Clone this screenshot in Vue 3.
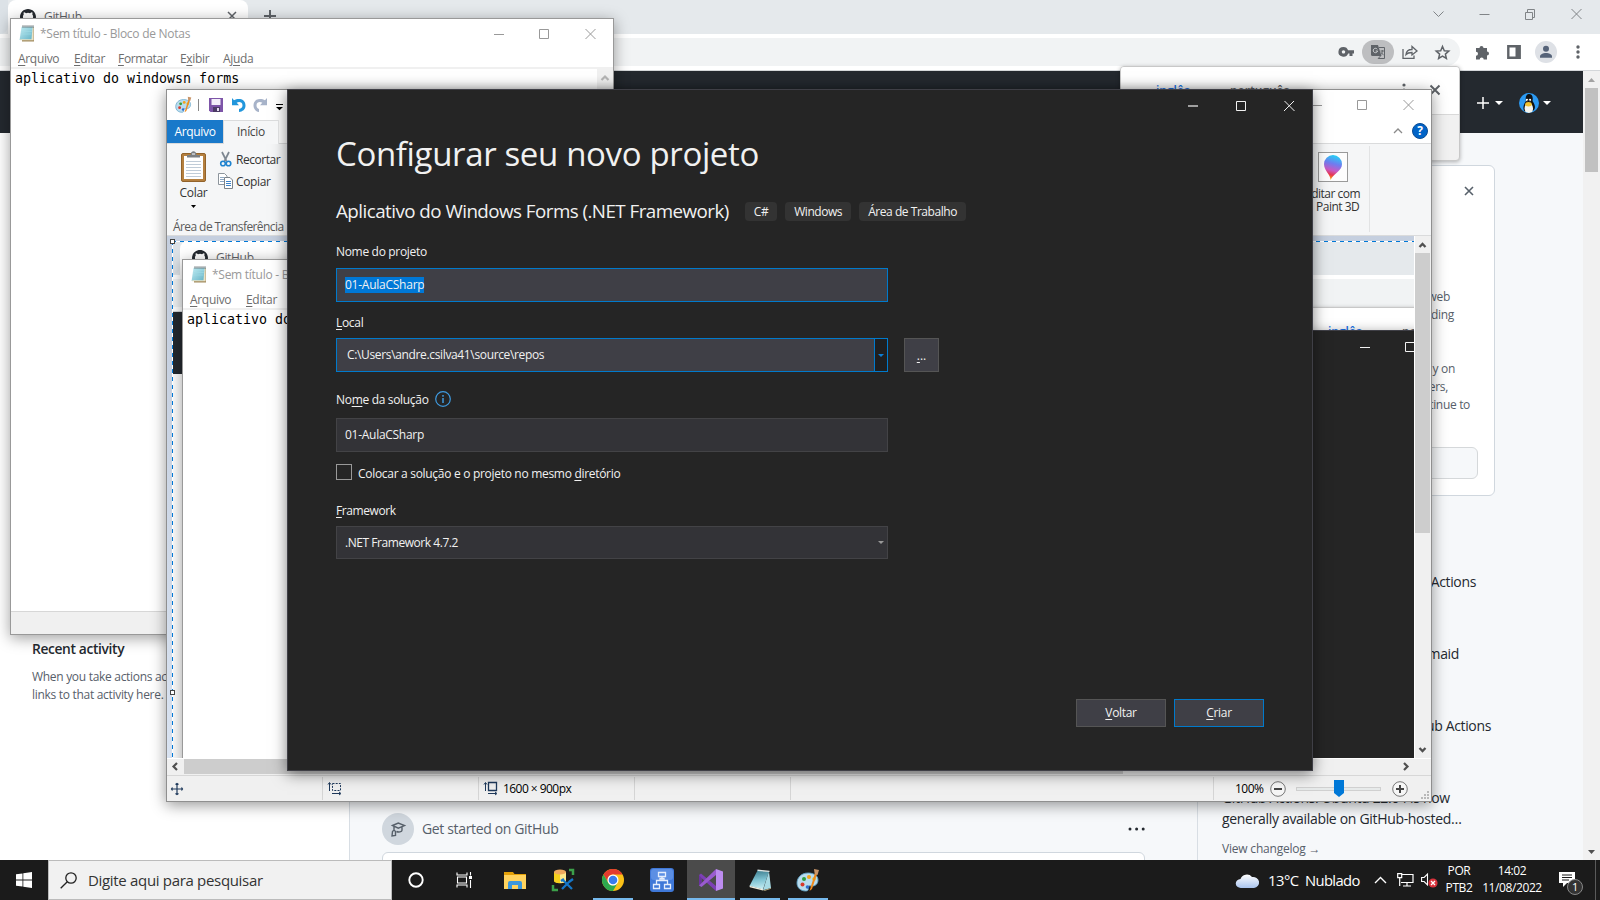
<script setup>
const menus = [
  ['A', 'rquivo', ''],
  ['E', 'ditar', ''],
  ['F', 'ormatar', ''],
  ['x', 'ibir', 'E'],
  ['u', 'da', 'Aj'],
]
const menuClass = ['m0', 'm1', 'm2', 'm3', 'm4']
const note = 'aplicativo do windowsn forms'
const tags = ['C#', 'Windows', 'Área de Trabalho']
</script>

<template>
  <div class="desktop">
    <svg class="defs" width="0" height="0">
      <defs>
        <linearGradient id="padG" x1="0" y1="0" x2="1" y2="1">
          <stop offset="0" stop-color="#c4edf3" /><stop offset="1" stop-color="#5fb0c4" />
        </linearGradient>
        <linearGradient id="padDark" x1=".4" y1="0" x2=".5" y2="1">
          <stop offset="0" stop-color="#3f7f90" /><stop offset=".5" stop-color="#7fc3d2" /><stop offset="1" stop-color="#c9eff5" />
        </linearGradient>
        <linearGradient id="dropG" x1=".6" y1="0" x2=".4" y2="1">
          <stop offset="0" stop-color="#22d3f5" /><stop offset=".35" stop-color="#6f7df0" />
          <stop offset=".62" stop-color="#c95ac4" /><stop offset=".8" stop-color="#e8384f" /><stop offset="1" stop-color="#ffb400" />
        </linearGradient>
        <linearGradient id="cloudG" x1="0" y1="0" x2="0" y2="1">
          <stop offset="0" stop-color="#ffffff" /><stop offset="1" stop-color="#a9c4ee" />
        </linearGradient>
        <symbol id="notepad" viewBox="0 0 16 17">
          <path d="M3 2h12v14.5H3z" fill="#a08a5c" /><path d="M2.5 1.8h12L12.8 15H.6z" fill="url(#padG)" />
          <path d="M13.6 2l1 .2v13H1l.3-1h11.2z" fill="#e9e2c6" />
          <path d="M3 4h10M2.8 6.500h10M2.500 9h10" stroke="#9fdbe5" stroke-width=".6" />
          <path d="M4 .3v2.500M6 .3v2.500M8 .3v2.500M10 .3v2.500M12 .3v2.500M14 .3v2.500" stroke="#4f5a5e" stroke-width=".9" />
        </symbol>
        <symbol id="palette" viewBox="0 0 24 24">
          <path d="M12 5C5 5 1 10 1 15s4 8 8.500 8c3 0 3-1.500 2.500-3s.5-2.500 3-2c4 .6 7-2 7-6 0-4.500-4.500-7-10-7z" fill="#b9dcee" stroke="#5b9fc4" stroke-width=".9" />
          <circle cx="6.500" cy="16.500" r="2" fill="#d8392b" /><circle cx="8" cy="11" r="2" fill="#2f9e3f" />
          <circle cx="13" cy="9" r="2" fill="#f2a41c" /><circle cx="18" cy="11" r="1.800" fill="#e8c21c" />
          <circle cx="11.500" cy="19" r="1.800" fill="#2f6fd0" />
          <path d="M19 5l2 1-5 15-2.500 2z" fill="#f08a1d" /><path d="M18 1l5 1-1.500 5-2.800-1z" fill="#c79468" />
        </symbol>
        <symbol id="octocat" viewBox="0 0 16 16">
          <path fill="#24292f" d="M8 0C3.580 0 0 3.580 0 8c0 3.540 2.290 6.530 5.470 7.590.4.070.55-.17.55-.38v-1.490c-2.010.37-2.530-.49-2.690-.94-.09-.23-.48-.94-.82-1.130-.28-.15-.68-.52-.01-.53.63-.01 1.080.58 1.230.82.72 1.210 1.870.87 2.330.66.07-.52.28-.87.51-1.070-1.780-.2-3.640-.89-3.640-3.950 0-.87.31-1.590.82-2.150-.08-.2-.36-1.020.08-2.120 0 0 .67-.21 2.200.82a7.600 7.600 0 0 1 4 0c1.530-1.040 2.200-.82 2.200-.82.44 1.100.16 1.920.08 2.120.51.56.82 1.270.82 2.150 0 3.070-1.870 3.750-3.650 3.950.29.25.54.73.54 1.480v2.200c0 .21.15.46.55.38A8.010 8.010 0 0 0 16 8c0-4.420-3.580-8-8-8z" />
        </symbol>
        <symbol id="winbtns" viewBox="0 0 102 12">
          <path d="M0 6.500h10M45.500 1.500h9v9h-9zM91.500 1l10 10M101.500 1l-10 10" fill="none" stroke="currentColor" />
        </symbol>
      </defs>
    </svg>

    <!-- browser -->
    <div class="chrome">
      <div class="strip">
        <div class="edge"></div>
        <div class="tab">
          <svg width="16" height="16"><use href="#octocat" /></svg>
          <span class="tabname">GitHub</span>
          <svg class="tabx" width="8" height="8"><path d="M0 0l8 8M8 0L0 8" stroke="#5f6368" stroke-width="1.500" /></svg>
        </div>
        <svg class="plus" width="12" height="12"><path d="M6 0v12M0 6h12" stroke="#5f6368" stroke-width="2" /></svg>
        <svg class="sysbtns" width="150" height="12" viewBox="0 0 150 12" fill="none" stroke="#808487">
          <path d="M.5 3.500l5 5 5-5M46.500 6.500h10M92.500 4.500h7v7h-7zM94.500 4V1.500h7v8H99M138.500 1l10 10M148.500 1l-10 10" />
        </svg>
      </div>
      <div class="toolbar">
        <div class="omni">
          <svg width="15" height="10" viewBox="0 0 15 10"><path fill="#5f6368" fill-rule="evenodd" d="M4.500 0a5 4.800 0 0 1 4.600 3.300H15v3.200h-1.500V9h-3V6.500H9.100A5 4.800 0 1 1 4.500 0zm0 3.200a1.700 1.700 0 1 0 .01 0z" /></svg>
          <span class="trans">
            <svg width="14" height="14" viewBox="0 0 14 14"><path d="M0 0h7l3.500 11H1.500A1.500 1.500 0 0 1 0 9.500z" fill="#5f6368" /><path d="M8 2.500h5.500v11H7.200L9.500 11" fill="none" stroke="#5f6368" /><path d="M6.300 4.300A2.200 2.200 0 1 0 6.600 6H4.700" fill="none" stroke="#d8dadd" stroke-width=".9" /><path d="M9.500 6H13M11.300 5v1c0 2-.6 3-1.400 3.600M10.300 7.500l2.200 2.700" fill="none" stroke="#5f6368" stroke-width=".9" /></svg>
          </span>
          <svg width="16" height="14" viewBox="0 0 16 14" fill="none" stroke="#5f6368" stroke-width="1.300"><path d="M1 4v9.300h11V10.500M4 9.500c.3-3.500 3-5 6-5V1.500L15 6l-5 4V7.500c-2.500 0-4.500.3-6 2z" /></svg>
          <svg class="star" width="15" height="15" viewBox="0 0 15 15"><path d="M7.500 1.500l1.800 4.200 4.500.4-3.400 3 1 4.400-3.900-2.300-3.900 2.300 1-4.400-3.400-3 4.500-.4z" fill="none" stroke="#5f6368" stroke-width="1.500" /></svg>
        </div>
        <svg class="puzzle" width="15" height="15" viewBox="0 0 15 15"><path d="M1 3h3.500a2 2 0 1 1 4 0H12v3.500a2 2 0 1 1 0 4V14.500H8.700a2 2 0 1 0-4 0H1V10.800a2 2 0 1 0 0-4z" fill="#5f6368" /></svg>
        <svg class="panel" width="14" height="14"><path d="M1.300 1.300h11.400v11.400H1.300z" fill="none" stroke="#5f6368" stroke-width="2.400" /><path d="M8.500 1H13v12H8.500z" fill="#5f6368" /></svg>
        <svg class="person" width="22" height="22"><circle cx="11" cy="11" r="11" fill="#dee1e6" /><circle cx="11" cy="7.800" r="3" fill="#566379" /><path d="M5 16.800v-1.300c0-2 3-3.500 6-3.500s6 1.500 6 3.500v1.300z" fill="#566379" /></svg>
        <svg class="dots" width="4" height="14" fill="#5f6368"><circle cx="2" cy="2" r="1.700" /><circle cx="2" cy="7" r="1.700" /><circle cx="2" cy="12" r="1.700" /></svg>
      </div>
      <div class="page">
        <div class="ghbody">
          <div class="ghhead">
            <svg class="ghplus" width="12" height="12"><path d="M6 0v12M0 6h12" stroke="#fff" stroke-width="1.500" /></svg>
            <svg class="caret" width="8" height="4"><path d="M0 0h8L4 4z" fill="#fff" /></svg>
            <svg class="tux" width="20" height="20" viewBox="0 0 20 20"><circle cx="10" cy="10" r="10" fill="#2b9af3" /><path d="M7 8c-1-4 .5-7 3-7s4.500 2 3.500 7c2 3 3.500 6 1.500 9l-4 2.500-6-1.500c-1.500-4 0-7 2-10z" fill="#101010" /><path d="M7 11h5.500c2 3 2 6 .5 8l-3 1-3.500-1C5 16 5.500 13 7 11z" fill="#f4f4ee" /><ellipse cx="9.500" cy="11.300" rx="3.300" ry="2.200" fill="#f1c232" /><circle cx="8" cy="7" r="1.200" fill="#fff" /><circle cx="11" cy="7" r="1.200" fill="#fff" /><circle cx="8.300" cy="7.200" r=".5" /><circle cx="10.800" cy="7.200" r=".5" /></svg>
            <svg class="caret second" width="8" height="4"><path d="M0 0h8L4 4z" fill="#fff" /></svg>
          </div>
          <div class="ghcols">
            <aside class="left">
              <h4>Recent activity</h4>
              <p>When you take actions ac<br />links to that activity here.</p>
            </aside>
            <main class="mid">
              <div class="started">
                <span class="cap"><svg width="16" height="16" viewBox="0 0 16 16" fill="none" stroke="#57606a" stroke-width="1.400"><path d="M2.500 4.500L8.300 2l6.200 2.600L8.300 7.200zM4 5.500v3M2 15l.5-4.500L4 9l1.500 1.500V14.500zM6.500 10.500c2 .9 5.500.5 5.500-1.200V6" /></svg></span>
                <span class="stxt">Get started on GitHub</span>
                <svg class="more" width="18" height="4" fill="#24292f"><circle cx="2" cy="2" r="1.500" /><circle cx="8.600" cy="2" r="1.500" /><circle cx="15.200" cy="2" r="1.500" /></svg>
              </div>
              <div class="feed"></div>
            </main>
            <aside class="right">
              <div class="card">
                <svg class="cardx" width="10" height="10"><path d="M1 1l8 8M9 1L1 9" stroke="#57606a" stroke-width="1.600" /></svg>
                <p class="f1">web</p><p class="f2">ding</p>
                <p class="f3">y on</p><p class="f4">ers,</p><p class="f5">tinue to</p>
                <div class="cardbtn"></div>
              </div>
              <p class="n1">Actions</p><p class="n2">maid</p><p class="n3">ub Actions</p>
              <p class="n4">GitHub Actions: Ubuntu 22.04 is now<br />generally available on GitHub-hosted…</p>
              <p class="n5">View changelog →</p>
            </aside>
          </div>
        </div>
        <div class="pagescroll">
          <svg width="17" height="17"><path d="M5 11h7L8.500 7z" fill="#a3a3a3" /></svg>
          <div class="thumb"></div>
          <svg class="dn" width="17" height="17"><path d="M5 7h7l-3.500 4z" fill="#505050" /></svg>
        </div>
      </div>
    </div>

    <!-- translate bubble -->
    <div class="bubble">
      <div class="bubtop">
        <span class="lang on">inglês</span><span class="lang off">português</span>
        <svg class="bdots" width="4" height="14" fill="#5f6368"><circle cx="2" cy="2" r="1.600" /><circle cx="2" cy="7" r="1.600" /></svg>
        <svg class="bx" width="10" height="10"><path d="M.5.5l9 9M9.500.5l-9 9" stroke="#5f6368" stroke-width="2" /></svg>
      </div>
    </div>

    <!-- notepad -->
    <section class="notepad">
      <header class="nptitle">
        <svg width="16" height="17"><use href="#notepad" /></svg>
        <span>*Sem título - Bloco de Notas</span>
        <svg class="wb" width="102" height="12"><use href="#winbtns" /></svg>
      </header>
      <nav class="npmenu">
        <span v-for="(m, i) in menus" :key="i" :class="menuClass[i]">{{ m[2] }}<u>{{ m[0] }}</u>{{ m[1] }}</span>
      </nav>
      <div class="nptext">
        <pre>{{ note }}</pre>
        <div class="npscroll"><svg width="16" height="17"><path d="M4.500 11L8 7.500l3.500 3.500" fill="none" stroke="#b5b5b5" stroke-width="2.200" /></svg></div>
      </div>
      <footer class="npfoot"></footer>
    </section>

    <!-- paint -->
    <section class="paint">
      <header class="pttitle">
        <svg class="pal" width="17" height="17"><use href="#palette" /></svg>
        <i class="vsep"></i>
        <svg class="save" width="14" height="14"><path d="M0 0h14v14H1.500L0 12.500z" fill="#7d55a8" /><path d="M2.500 1h9v6h-9z" fill="#f4effa" /><path d="M4 9h7v5H4z" fill="#4c3b66" /><path d="M8 10h2v3H8z" fill="#e4dcee" /></svg>
        <svg class="undo" width="14" height="14" viewBox="0 0 14 14"><path d="M0 0l2 2.300C6-.2 13.500.4 13.500 7.500c0 4-3 6.200-6.500 6.500v-3c2.300-.4 3.500-1.600 3.500-3.700C10.500 4 7 3.300 4.700 4.800L7 7.200H0z" fill="#2196dc" /></svg>
        <svg class="redo" width="14" height="14" viewBox="0 0 14 14"><path d="M14 0l-2 2.300C8-.2.5.4.5 7.500c0 4 3 6.200 5.500 6.500v-3c-1.500-.4-2.500-1.600-2.500-3.700C3.500 4 7 3.300 9.300 4.800L7 7.200h7z" fill="#a7b3c9" /></svg>
        <svg class="qdrop" width="7" height="6"><path d="M0 0h7v1H0zM0 3h7L3.500 6.300z" /></svg>
        <svg class="wb" width="102" height="12"><use href="#winbtns" /></svg>
      </header>
      <nav class="pttabs">
        <b>Arquivo</b><span>Início</span>
        <em></em>
        <svg class="up" width="10" height="6"><path d="M1 5l4-4 4 4" fill="none" stroke="#8a8a8a" stroke-width="1.300" /></svg>
        <span class="help">?</span>
      </nav>
      <div class="ribbon">
        <div class="clip">
          <div class="cliprow">
            <div class="colar">
              <svg width="25" height="31" viewBox="0 0 25 31"><rect x=".5" y="2.500" width="24" height="28" rx="1.500" fill="#b5803f" stroke="#92632b" /><path d="M3 5h19v23H3z" fill="#fff" /><path d="M5 10.500h15M5 13.500h15M5 16.500h15M5 19.500h15M5 22.500h15M5 25.500h15" stroke="#c0ccd8" /><path d="M6 6.500V4h3.500c0-5 6-5 6 0H19v2.500z" fill="#7a7f84" /><path d="M11 3h3" stroke="#fff" /></svg>
              <span>Colar</span>
              <svg class="ca" width="5" height="3"><path d="M0 0h5L2.500 3z" /></svg>
            </div>
            <div class="cc">
              <div><svg width="15" height="16" viewBox="0 0 15 16"><path d="M4 1l4.500 9M11 1L6.500 10" stroke="#7d8791" stroke-width="1.700" /><circle cx="5" cy="12.500" r="2.300" fill="none" stroke="#1f83cf" stroke-width="1.600" /><circle cx="10.500" cy="12.500" r="2.300" fill="none" stroke="#1f83cf" stroke-width="1.600" /></svg><span>Recortar</span></div>
              <div><svg width="15" height="16" viewBox="0 0 15 16"><path d="M.5.500h6l2.500 2.500v8.500H.5z" fill="#fff" stroke="#8d959c" /><path d="M2 4.500h4M2 6.500h4M2 8.500h4" stroke="#8fa9c4" /><path d="M6.500 4.500h5.500l2.500 2.500v8.500h-8z" fill="#fff" stroke="#7b838a" /><path d="M8 8.500h5M8 10.500h5M8 12.500h5" stroke="#3d83c9" /></svg><span class="cp">Copiar</span></div>
            </div>
          </div>
          <p>Área de Transferência</p>
        </div>
        <div class="p3d">
          <span class="p3btn"><svg width="18" height="25" viewBox="0 0 18 25"><path d="M9 0a9 9 0 0 1 9 9c0 7-8 9-11.500 16C7 20 0 16 0 9a9 9 0 0 1 9-9z" fill="url(#dropG)" /></svg></span>
          <p>Editar com</p><p class="pp">Paint 3D</p>
        </div>
      </div>
      <div class="work">
        <div class="canvas">
          <!-- pasted capture -->
          <div class="mini">
            <div class="strip"><div class="edge"></div>
              <div class="tab"><svg width="16" height="16"><use href="#octocat" /></svg><span class="tabname">GitHub</span></div>
            </div>
            <div class="toolbar"><div class="omni"></div></div>
            <div class="minihead"></div>
            <div class="bubble"><div class="bubtop"><span class="lang on">inglês</span><span class="lang off">português</span></div></div>
            <section class="notepad">
              <header class="nptitle"><svg width="16" height="17"><use href="#notepad" /></svg><span>*Sem título - Bloco</span></header>
              <nav class="npmenu"><span class="m0"><u>A</u>rquivo</span><span class="m1"><u>E</u>ditar</span></nav>
              <div class="nptext"><pre>aplicativo do</pre></div>
            </section>
            <div class="minidlg"><svg class="wb" width="102" height="12"><use href="#winbtns" /></svg></div>
          </div>
          <i class="dash top"></i><i class="dash side"></i>
          <i class="grip g1"></i><i class="grip g2"></i>
        </div>
        <div class="vs">
          <svg width="15" height="16"><path d="M4.500 10L7.500 7l3 3" fill="none" stroke="#505050" stroke-width="2.300" /></svg>
          <div class="vthumb"></div>
          <svg class="dn" width="15" height="16"><path d="M4.500 6l3 3 3-3" fill="none" stroke="#505050" stroke-width="2.300" /></svg>
        </div>
      </div>
      <div class="hs">
        <svg width="17" height="15"><path d="M10 4L6.500 7.500l3.500 3.500" fill="none" stroke="#505050" stroke-width="2.200" /></svg>
        <div class="hthumb"></div>
        <svg class="rt" width="17" height="15"><path d="M7 4l3.500 3.500L7 11" fill="none" stroke="#505050" stroke-width="2.200" /></svg>
      </div>
      <footer class="ptfoot">
        <div class="cell"><svg width="12" height="12" viewBox="0 0 12 12"><path d="M6 0v12M0 6h12M4.500 1.500L6 .5l1.500 1M4.500 10.500l1.500 1 1.500-1M1.500 4.500L.5 6l1 1.500M10.500 4.500l1 1.500-1 1.500" fill="none" stroke="#1e395b" stroke-width="1.200" /></svg></div>
        <div class="cell"><svg width="14" height="13" viewBox="0 0 14 13" fill="none" stroke="#1e395b"><path d="M4.500 1.500h8v7h-8z" stroke-dasharray="2 1.200" /><path d="M1.500 1v8M0 2.500l1.500-2 1.500 2M4 11.500h8M11 10l2 1.500-2 1.500" /></svg></div>
        <div class="cell"><svg width="14" height="13" viewBox="0 0 14 13" fill="none" stroke="#1e395b"><path d="M4.500.5h8v8h-8z" stroke-width="1.300" /><path d="M1.500 1v8M0 2.500l1.500-2 1.500 2M4 11.500h8M11 10l2 1.500-2 1.500" /></svg><span>1600 × 900px</span></div>
        <div class="cell"></div>
        <div class="cell wide"></div>
        <div class="zoom">
          <span>100%</span>
          <svg class="zm" width="16" height="16"><circle cx="8" cy="8" r="7.300" fill="#f6f6f6" stroke="#777" /><path d="M4 8h8" stroke="#444" stroke-width="2" /></svg>
          <div class="track"><svg width="10" height="17"><path d="M0 0h10v13l-5 4-5-4z" fill="#0078d7" /></svg></div>
          <svg class="zp" width="16" height="16"><circle cx="8" cy="8" r="7.300" fill="#f6f6f6" stroke="#777" /><path d="M4 8h8M8 4v8" stroke="#444" stroke-width="2" /></svg>
          <svg class="rsz" width="9" height="9" fill="#b8b8b8"><path d="M6 0h2v2H6zM3 3h2v2H3zM6 3h2v2H6zM0 6h2v2H0zM3 6h2v2H3zM6 6h2v2H6z" /></svg>
        </div>
      </footer>
    </section>

    <!-- project dialog -->
    <section class="dialog">
      <svg class="wb" width="106" height="12" fill="none" stroke="#f1f1f1"><path d="M0 6h10" stroke-width="1.200" /><path d="M48.500 1.500h9v9h-9zM96.500 1l10 10M106 1l-10 10" /></svg>
      <h1>Configurar seu novo projeto</h1>
      <div class="sub"><h2>Aplicativo do Windows Forms (.NET Framework)</h2>
        <span v-for="t in tags" :key="t" class="tag">{{ t }}</span>
      </div>
      <label class="l1">Nome do projeto</label>
      <div class="field act"><span class="sel">01-AulaCSharp</span></div>
      <label class="l2"><u>L</u>ocal</label>
      <div class="locrow">
        <div class="field act loc"><span>C:\Users\andre.csilva41\source\repos</span><i><svg width="6" height="3"><path d="M0 0h6L3 3z" fill="#0e7fd4" /></svg></i></div>
        <div class="browse"><u>.</u>..</div>
      </div>
      <label class="l3">No<u>m</u>e da solução<svg width="16" height="16"><circle cx="8" cy="8" r="7.300" fill="none" stroke="#3f9be0" stroke-width="1.200" /><path d="M8 4v1.700M8 7v5" stroke="#3f9be0" stroke-width="1.500" /></svg></label>
      <div class="field"><span class="fs">01-AulaCSharp</span></div>
      <div class="check"><i></i><span>Colocar a solução e o projeto no mesmo <u>d</u>iretório</span></div>
      <label class="l4"><u>F</u>ramework</label>
      <div class="field fw"><span>.NET Framework 4.7.2</span><svg width="6" height="3"><path d="M0 0h6L3 3z" fill="#999" /></svg></div>
      <div class="btns"><button><u>V</u>oltar</button><button class="pri"><u>C</u>riar</button></div>
    </section>

    <!-- taskbar -->
    <footer class="taskbar">
      <div class="start"><svg width="16" height="16" fill="#fff"><path d="M0 2.300L6.500 1.400V7.600H0zM7.300 1.300L16 0V7.600H7.300zM0 8.400h6.500v6.200L0 13.700zM7.300 8.400H16V16L7.300 14.700z" /></svg></div>
      <div class="search"><svg width="17" height="17" fill="none" stroke="#222" stroke-width="1.300"><circle cx="11" cy="6" r="5.200" /><path d="M7.300 9.700L.7 16.300" /></svg><span>Digite aqui para pesquisar</span></div>
      <div class="tb k0"><svg width="16" height="16"><circle cx="8" cy="8" r="6.700" fill="none" stroke="#fff" stroke-width="1.900" /></svg></div>
      <div class="tb k1"><svg width="17" height="16" viewBox="0 0 17 16" fill="none" stroke="#fff" stroke-width="1.100"><path d="M1 .5v2.500h10V.5M1 15.500V13h10v2.500M1.500 5h9v6h-9zM14.500 0v3.500M14.500 8v8" /><path d="M13 4h3v3h-3z" fill="#fff" stroke="none" /></svg></div>
      <div class="tb k2"><svg width="22" height="19"><path d="M0 1h9l1.500 2H22v15H0z" fill="#e3a008" /><path d="M0 4h22v14H0z" fill="#ffd35e" /><path d="M4 18v-6q0-2 2-2h10q2 0 2 2v6h-4v-4H8v4z" fill="#3b97dd" /></svg></div>
      <div class="tb k3"><svg width="22" height="22"><path d="M2 3v9c0 3 12 3 12 0V3z" fill="#f6cf1c" /><path d="M8 3h6v9c0 1.500-3 2-6 2z" fill="#ffe98a" /><ellipse cx="8" cy="3" rx="6" ry="2.500" fill="#f0a95c" /><path d="M17 1h4v5M1 16v5h5" fill="none" stroke="#3ca04a" stroke-width="2.500" /><path d="M10 20l8-8M11 11l9 9M9 12l3-2M17 13l4-3" stroke="#1677c8" stroke-width="2.300" /></svg></div>
      <div class="tb run k4"><svg width="22" height="22" viewBox="-11 -11 22 22"><circle r="11" fill="#fbc117" /><path d="M-9.530-5.500A11 11 0 0 1 9.530-5.500H0A5.500 5.500 0 0 0-4.760 2.750z" fill="#e33b2e" /><path d="M-9.530-5.500A11 11 0 0 0 0 11L4.760 2.750A5.500 5.500 0 0 1-4.760 2.750z" fill="#2da94f" /><circle r="5.500" fill="#fff" /><circle r="4.300" fill="#3a7cec" /></svg></div>
      <div class="tb k5"><svg width="24" height="24"><rect width="24" height="24" rx="3" fill="#3f78d8" /><rect x="1" y="1" width="22" height="11" rx="3" fill="#5c8fe4" /><path d="M8.500 4.500h7v4h-7zM3.500 16.500h6v4h-6zM14.500 16.500h6v4h-6zM12 8.500v4M6.500 16.500v-4h11v4M10 12.500v-2h4v2" fill="none" stroke="#e4edfc" stroke-width="1.300" /></svg></div>
      <div class="tb run hot k6"><svg width="24" height="24" viewBox="0 0 24 24"><path d="M0 7l2-1.500L17 18v5L2.500 10v6z" fill="#7d3fb5" /><path d="M0 7l2.500 3v6L0 17.500z" fill="#6a33a0" /><path d="M0 17.500L17 1v6L2.500 19z" fill="#9a5bd0" /><path d="M17 1l7 2.500v17L17 23z" fill="#bd8cf0" /></svg></div>
      <div class="tb run k7"><svg width="23" height="22" viewBox="0 0 23 22"><path d="M8.500 1.500L20 2.500 14 20.500.5 17z" fill="url(#padDark)" /><path d="M.5 16.800l13.700 3.400-.2 1.300L.8 18.200z" fill="#f3eede" /><path d="M14 21.300L20 2.500l2 16.500z" fill="#a8dbe5" /><path d="M14 21.500l8-2.600v.8l-6 2z" fill="#c9b98a" /><path d="M8.500 1.300L20.500 2.400" stroke="#dfe7e6" stroke-width="1.400" /></svg></div>
      <div class="tb run k8"><svg width="24" height="24"><use href="#palette" /></svg></div>
      <div class="tray">
        <svg class="cloud" width="23" height="15" viewBox="0 0 23 15"><path d="M5 15a5 4.500 0 0 1-.5-9A6.500 6 0 0 1 16 4a6 5.500 0 0 1 2 11z" fill="url(#cloudG)" /></svg>
        <span class="w1">13°C</span><span class="w2">Nublado</span>
        <svg class="chev" width="13" height="8"><path d="M1 7l5.500-5.500L12 7" fill="none" stroke="#fff" stroke-width="1.400" /></svg>
        <svg class="net" width="17" height="14" viewBox="0 0 17 14" fill="none" stroke="#fff" stroke-width="1.200"><path d="M5 1.500h11v8H4M10 10v3M6 13h8M.7.600h4v4h-4zM2.700 5v8" /></svg>
        <svg class="vol" width="17" height="15"><path d="M.6 4.500h2.500L6.500 1v11L3.100 8.500H.6z" fill="none" stroke="#fff" stroke-width="1.100" /><circle cx="12" cy="10" r="4.600" fill="#d8323c" /><path d="M10 8l4 4M14 8l-4 4" stroke="#fff" stroke-width="1.300" /></svg>
        <span class="two lng">POR<br />PTB2</span>
        <span class="two clk">14:02<br />11/08/2022</span>
        <div class="notif"><svg width="17" height="15"><path d="M0 0h16v11H8l-4 4v-4H0z" fill="#fff" /><path d="M3 3h10M3 5.500h10M3 8h7" stroke="#1b1b1b" /></svg><b>1</b></div>
        <i class="peek"></i>
      </div>
    </footer>
  </div>
</template>

<style>
html, body { margin: 0; overflow: hidden; }
</style>

<style scoped>
* { box-sizing: border-box; margin: 0; padding: 0; }
svg { display: block; flex: none; overflow: visible; }
p, span, h1, h2, h4, label, pre, button { white-space: nowrap; font-weight: 400; }
i, em { font-style: normal; }
u { text-decoration: underline; text-underline-offset: 1.500px; text-decoration-thickness: 1px; }
.desktop { position: relative; width: 1600px; height: 900px; overflow: hidden; background: #fff; font: 12px/18px "Open Sans", "Noto Sans", sans-serif; letter-spacing: -.32px; color: #000; }
.defs { position: absolute; }

.chrome { width: 1600px; height: 860px; display: flex; flex-direction: column; }
.strip { height: 34px; flex: none; background: #e5e9ec; display: flex; }
.edge { width: 8px; background: #dce2e7; border-bottom-right-radius: 8px; }
.tab { width: 240px; height: 34px; background: #fff; border-radius: 8px 8px 0 0; display: flex; padding: 9px 12px 0 12px; }
.tabname { margin-left: 8px; line-height: 16px; color: #5f6368; }
.tabx { margin: 3px 0 0 auto; }
.plus { margin: 10px 0 0 16px; }
.sysbtns { margin: 8px 17px 0 auto; }
.toolbar { height: 37px; flex: none; background: #fff; border-bottom: 1px solid #d4d7da; display: flex; align-items: center; }
.omni { width: 1460px; height: 28px; background: #f1f3f4; border-radius: 0 14px 14px 0; display: flex; align-items: center; justify-content: flex-end; padding-right: 10px; }
.trans { width: 32px; height: 24px; margin: 0 8px; border-radius: 12px; background: #bdbec0; display: flex; align-items: center; justify-content: center; }
.star { margin-left: 17px; }
.puzzle { margin-left: 15px; }
.panel { margin-left: 17px; }
.person { margin-left: 14px; }
.dots { margin-left: 19px; }
.page { flex: 1; display: flex; min-height: 0; }
.ghbody { width: 1583px; display: flex; flex-direction: column; }
.ghhead { height: 62px; flex: none; background: #24292f; display: flex; align-items: center; padding: 2px 32px 0 0; justify-content: flex-end; }
.caret { margin-left: 6px; }
.tux { margin-left: 16px; }
.second { margin-left: 4px; }
.ghcols { flex: 1; display: flex; background: #f6f8fa; min-height: 0; overflow: hidden; }
.left { width: 350px; background: #fff; border-right: 1px solid #d8dee4; padding: 507px 0 0 32px; color: #57606a; }
.left h4 { font-size: 13.800px; font-weight: 600; color: #24292f; line-height: 18px; margin-bottom: 10px; letter-spacing: -.36px; }
.left p { letter-spacing: -.3px; }
.mid { width: 847px; padding: 680px 0 0 32px; }
.started { height: 32px; display: flex; align-items: center; color: #57606a; }
.cap { width: 32px; height: 32px; border-radius: 16px; background: #d0d7de; display: flex; align-items: center; justify-content: center; }
.stxt { margin-left: 8px; font-size: 14px; letter-spacing: -.35px; }
.more { margin-left: auto; margin-right: 51px; }
.feed { width: 763px; height: 20px; margin-top: 7px; border: 1px solid #d0d7de; border-radius: 6px; background: #fff; }
.right { width: 386px; border-left: 1px solid #d8dee4; padding: 32px 0 0 24px; color: #57606a; }
.card { width: 273px; height: 331px; background: #fff; border: 1px solid #d0d7de; border-radius: 6px; padding: 20px 16px 0 0; }
.card p { text-align: right; }
.cardx { margin: 0 4px 92px auto; }
.f1 { padding-right: 28px; }
.f2 { padding-right: 24px; }
.f3 { padding-right: 23px; margin-top: 36px; }
.f4 { padding-right: 30px; }
.f5 { padding-right: 8px; }
.cardbtn { height: 32px; margin-top: 33px; border: 1px solid #d5d8da; border-radius: 6px; background: #f6f8fa; }
.n1, .n2, .n3, .n4 { font-size: 14px; letter-spacing: -.35px; line-height: 21px; color: #24292f; }
.n1 { width: 254px; text-align: right; margin-top: 75px; }
.n2 { width: 237px; text-align: right; margin-top: 51px; }
.n3 { width: 269px; text-align: right; margin-top: 51px; }
.n4 { margin-top: 51px; letter-spacing: -.32px; }
.n5 { margin-top: 11px; letter-spacing: -.2px; }
.pagescroll { width: 17px; background: #f1f1f1; display: flex; flex-direction: column; }
.thumb { width: 13px; height: 84px; margin-left: 2px; background: #c1c1c1; }
.dn { margin-top: auto; }

.bubble { position: absolute; left: 1120px; top: 66px; width: 340px; height: 95px; background: #f1f1f1; border: 1px solid #c8c8c8; border-radius: 4px; box-shadow: 0 1px 4px rgba(0,0,0,.3); overflow: hidden; }
.bubtop { height: 48px; background: #fff; border-bottom: 1px solid #d9d9d9; display: flex; padding: 14px 19px 0 35px; }
.lang { font-size: 12px; line-height: 19px; font-weight: 600; letter-spacing: 0; }
.on { color: #1a73e8; width: 74px; }
.off { color: #5f6368; }
.bdots { margin: 2px 24px 0 auto; }
.bx { margin-top: 4px; }

.notepad { position: absolute; left: 10px; top: 18px; width: 604px; height: 617px; background: #fff; border: 1px solid #999; box-shadow: 0 3px 14px rgba(0,0,0,.38); display: flex; flex-direction: column; }
.nptitle { height: 29px; display: flex; align-items: center; padding: 0 17px 0 8px; color: #999; }
.nptitle > span { margin-left: 5px; letter-spacing: -.27px; }
.wb { margin-left: auto; color: #999; }
.nptitle .wb { width: 102px; }
.npmenu { height: 19px; display: flex; padding: 1px 0 0 7px; color: #6d6d6d; }
.npmenu span { line-height: 20px; }
.m0 { width: 56px; } .m1 { width: 44px; } .m2 { width: 62px; } .m3 { width: 43px; }
.nptext { flex: 1; border-top: 2px solid #f0f0f0; display: flex; justify-content: space-between; }
.nptext pre { font: 13.300px/20px "DejaVu Sans Mono", monospace; letter-spacing: 0; padding-left: 4px; }
.npscroll { width: 16px; background: #f0f0f0; }
.npfoot { height: 23px; border-top: 1px solid #d7d7d7; background: #f0f0f0; }

.paint { position: absolute; left: 166px; top: 89px; width: 1266px; height: 713px; background: #fff; border: 1px solid #8f8f8f; box-shadow: 0 3px 14px rgba(0,0,0,.42); display: flex; flex-direction: column; }
.pttitle { height: 30px; display: flex; align-items: center; padding: 0 17px 1px 8px; }
.vsep { width: 1px; height: 12px; background: #888; margin-left: 6px; }
.save { margin-left: 10px; } .undo { margin-left: 9px; } .redo { margin-left: 7px; } .qdrop { margin-left: 9px; margin-top: 4px; }
.pttabs { height: 24px; flex: none; display: flex; line-height: 24px; color: #444; }
.pttabs b { width: 56px; background: #1979ca; color: #fff; font-weight: 400; text-align: center; height: 24px; }
.pttabs > span:not(.help) { position: relative; z-index: 1; width: 56px; background: #f5f6f7; border: 1px solid #dadbdc; border-bottom: 0; text-align: center; line-height: 22px; }
.pttabs em { flex: 1; border-bottom: 1px solid #dadbdc; }
.up, .help { flex: none; }
.up { margin: 8px 0 0; }
.help { width: 16px; height: 16px; border-radius: 8px; background: #0063c7; border: 1px solid #0a4c94; color: #fff; font-weight: 700; line-height: 14px; text-align: center; margin: 3px 3px 0 9px; }
.ribbon { height: 93px; flex: none; background: #f5f6f7; border-top: 1px solid #dadbdc; border-bottom: 1px solid #dadbdc; margin-top: -1px; display: flex; justify-content: space-between; color: #333; }
.clip { width: 120px; }
.cliprow { height: 73px; display: flex; }
.colar { width: 52px; padding: 7px 0 0 1px; display: flex; flex-direction: column; align-items: center; }
.colar span { line-height: 18px; margin-top: 2px; }
.ca { margin-top: 3px; }
.cc { padding-top: 4px; }
.cc div { display: flex; align-items: center; height: 22px; margin-left: -1px; }
.cc div span { margin-left: 3px; letter-spacing: -.45px; padding-top: 1px; }
.cc div .cp { letter-spacing: -.35px; }
.clip p { color: #5a5a5a; padding-left: 6px; letter-spacing: -.58px; line-height: 20px; }
.p3d { width: 62px; height: 86px; margin: 2px 61px 0 0; border-right: 1px solid #e2e3e4; padding-top: 6px; }
.p3btn { width: 30px; height: 30px; margin-left: 10px; margin-bottom: 5px; border: 1px solid #9a9a9a; background: #fdfdfd; display: flex; align-items: center; justify-content: center; }
.p3d p { line-height: 13px; margin-left: -3px; letter-spacing: -.5px; }
.p3d .pp { margin-left: 8px; }
.work { height: 522px; flex: none; display: flex; background: linear-gradient(#c5cfdf, #dce6f4); }
.canvas { position: relative; width: 1247px; height: 522px; overflow: hidden; }
.mini { position: absolute; left: 5px; top: 5px; width: 1600px; height: 900px; background: #fff; }
.minihead { width: 1100px; height: 62px; background: #24292f; }
.minidlg { position: absolute; left: 287px; top: 89px; width: 1026px; height: 700px; background: #252525; border: 1px solid #3f3f46; box-shadow: 0 3px 12px rgba(0,0,0,.45); }
.minidlg .wb { margin: 10px 20px 0 900px; color: #f1f1f1; }
.dash { position: absolute; }
.dash.top { left: 5px; top: 5px; width: 1242px; height: 1px; background: repeating-linear-gradient(90deg, #0078d7 0 4px, #fff 4px 8px); }
.dash.side { left: 5px; top: 5px; width: 1px; height: 517px; background: repeating-linear-gradient(#0078d7 0 4px, #fff 4px 8px); }
.grip { position: absolute; left: 3px; width: 5px; height: 5px; background: #fff; border: 1px solid #444; }
.g1 { top: 3px; } .g2 { top: 454px; }
.vs { width: 17px; background: #f0f0f0; border-left: 1px solid #fff; padding-top: 1px; display: flex; flex-direction: column; }
.vthumb { width: 15px; height: 280px; background: #cdcdcd; }
.hs { height: 17px; flex: none; border-top: 1px solid #fff; border-bottom: 1px solid #f0f0f0; background: #f0f0f0; display: flex; }
.hthumb { width: 939px; height: 15px; background: #cdcdcd; }
.rt { margin-left: auto; margin-right: 17px; }
.ptfoot { flex: 1; border-top: 1px solid #d7d7d7; background: #f0f0f0; display: flex; align-items: center; }
.cell { height: 23px; flex: none; border-right: 1px solid #d5d5d5; display: flex; align-items: center; padding-left: 4px; width: 156px; }
.cell + .cell { padding-left: 5px; }
.cell.wide { width: 423px; }
.cell span { margin-left: 5px; letter-spacing: -.55px; }
.zoom { flex: 1; display: flex; align-items: center; padding-left: 21px; }
.zoom > span { width: 29px; letter-spacing: -.5px; }
.zm { margin-left: 6px; }
.track { width: 85px; height: 4px; margin-left: 10px; border: 1px solid #d0d0d0; background: #e7eaea; padding-left: 37px; }
.track svg { margin-top: -8px; }
.zp { margin-left: 11px; }
.rsz { margin: 13px 0 0 13px; }

.dialog { position: absolute; left: 287px; top: 89px; width: 1026px; height: 682px; background: #252525; border: 1px solid #3f3f46; box-shadow: 0 3px 14px rgba(0,0,0,.5); padding: 10px 48px 0; color: #f1f1f1; display: flex; flex-direction: column; }
.dialog .wb { margin-right: -30px; }
h1 { font-size: 33px; line-height: 44px; height: 44px; margin-top: 20px; letter-spacing: -.35px; }
h2 { font-size: 18.800px; line-height: 24px; letter-spacing: -.54px; }
.sub { display: flex; align-items: center; height: 24px; margin-top: 23px; }
.tag { height: 19px; line-height: 19px; padding: 0 9px; border-radius: 4px; background: #333; margin-left: 8px; letter-spacing: -.45px; }
h2 + .tag { margin-left: 16px; }
.dialog label { height: 18px; display: block; line-height: 19px; }
.l1 { margin-top: 19px; }
.field { width: 552px; height: 34px; flex: none; border: 1px solid #434346; background: #333337; display: flex; align-items: center; padding-left: 8px; margin-top: 8px; }
.act { border-color: #007acc; background: #3f3f46; }
.sel { background: #0078d7; line-height: 16px; letter-spacing: -.25px; }
.fs { letter-spacing: -.28px; }
.l2 { margin-top: 11px; }
.locrow { display: flex; height: 34px; margin-top: 7px; }
.loc { margin: 0; padding-left: 10px; justify-content: space-between; letter-spacing: -.35px; }
.loc i { width: 13px; height: 32px; border-left: 1px solid #007acc; background: #1f1f20; display: flex; align-items: center; justify-content: center; }
.browse { width: 35px; height: 34px; margin-left: 16px; border: 1px solid #555; background: #3f3f46; text-align: center; line-height: 34px; letter-spacing: 0; }
.dialog .l3 { margin-top: 18px; display: flex; white-space: pre; }
.l3 svg { margin: 1px 0 0 6px; }
.l3 + .field { margin-top: 10px; }
.check { display: flex; height: 18px; margin-top: 12px; }
.check i { width: 16px; height: 16px; border: 1px solid #999; margin-right: 6px; }
.check span { line-height: 20px; letter-spacing: -.3px; }
.l4 { margin-top: 19px; letter-spacing: -.4px; }
.l4 + .field { margin-top: 7px; }
.fw { height: 33px; justify-content: space-between; padding-right: 3px; }
.fw span { letter-spacing: -.45px; }
.btns { display: flex; justify-content: flex-end; gap: 8px; margin-top: 140px; }
button { width: 90px; height: 28px; border: 1px solid #555; background: #3f3f46; color: #f1f1f1; font: inherit; letter-spacing: inherit; line-height: 26px; }
.pri { border-color: #007acc; }

.taskbar { position: absolute; left: 0; top: 860px; width: 1600px; height: 40px; background: #1b1b1b; display: flex; color: #fff; }
.start { width: 48px; display: flex; align-items: center; justify-content: center; }
.search { width: 344px; height: 40px; background: #f1f1f1; border: 1px solid #bbb; color: #333; display: flex; align-items: center; padding-left: 11px; font-size: 15px; letter-spacing: -.32px; }
.search span { margin-left: 11px; margin-top: -1px; }
.tb { width: 48px; height: 40px; display: flex; align-items: center; justify-content: center; position: relative; }
.k5, .k6, .k7, .k8 { margin-left: 1px; }
.k8 { margin-left: 0; }
.k2 { margin-left: 3px; }
.k4 { margin-left: 2px; }
.run::after { content: ""; position: absolute; left: 4px; right: 4px; bottom: 0; height: 2px; background: #76b9ed; }
.hot { background: #4b4b4b; }
.hot::after { left: 0; right: 0; }
.tray { flex: 1; display: flex; align-items: center; justify-content: flex-end; font-size: 14.800px; }
.w1 { margin-left: 9px; width: 37px; margin-top: -1px; letter-spacing: -.5px; } .w2 { width: 53px; margin-top: -1px; letter-spacing: -.65px; }
.chev { margin-left: 16px; } .net { margin-left: 10px; } .vol { margin-left: 7px; }
.two { font-size: 12px; line-height: 17px; text-align: center; letter-spacing: -.4px; margin-top: -2px; }
.lng { width: 30px; margin-left: 6px; } .clk { width: 62px; margin-left: 7px; }
.notif { position: relative; width: 26px; height: 24px; margin-left: 16px; padding-top: 4px; }
.notif b { position: absolute; left: 8px; top: 11px; width: 16px; height: 16px; border-radius: 8px; background: #333; border: 1px solid #888; font-size: 11px; line-height: 14px; text-align: center; font-weight: 400; }
.peek { width: 1px; height: 40px; background: #5a5a5a; margin: 0 4px 0 10px; }
</style>
